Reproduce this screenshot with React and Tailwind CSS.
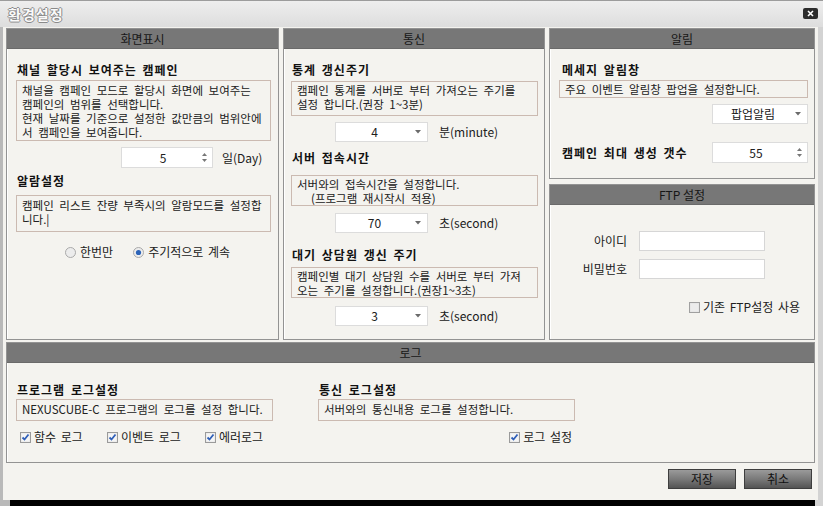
import React from 'react';

const Panel = ({ title, className = '', bodyClass = '', children }) => (
    <div className={`border border-[#939393] shadow-[inset_1px_1px_0_#ffffff] bg-[#f4f3ef] flex flex-col ${className}`}>
        <div className="h-[20px] shrink-0 bg-[#777777] border-b border-[#6a6a6a] flex items-center justify-center text-[12px] leading-[14px] text-[#161616]">
            {title}
        </div>
        <div className={`flex-1 flex flex-col ${bodyClass}`}>{children}</div>
    </div>
);

const Heading = ({ className = '', children }) => (
    <div className={`pl-[1px] text-[12px] leading-[14px] font-bold tracking-[1px] [word-spacing:2px] text-[#111] ${className}`}>{children}</div>
);

const Box = ({ className = '', children }) => (
    <div className={`border border-[#cbbab1] bg-[#f4f3ef] px-[5px] text-[11.5px] leading-[14px] [word-spacing:3px] text-[#202020] ${className}`}>{children}</div>
);

const Arrow = () => (
    <svg width="6" height="4" viewBox="0 0 6 4"><path d="M0 0h6L3 3.5z" fill="#6b6b6b" /></svg>
);

const Dropdown = ({ value, className = '' }) => (
    <div className={`h-[20px] bg-white border border-[#dcdcdc] flex items-center text-[12px] text-[#202020] ${className}`}>
        <span className="flex-1 text-center pl-[4px]">{value}</span>
        <span className="w-[18px] flex justify-center"><Arrow /></span>
    </div>
);

const Spin = ({ value, className = '' }) => (
    <div className={`h-[21px] bg-white border border-[#dcdcdc] flex items-center text-[12px] text-[#202020] ${className}`}>
        <span className="flex-1 text-center pl-[8px]">{value}</span>
        <span className="w-[16px] flex flex-col items-center gap-[3px]">
            <svg width="5" height="3" viewBox="0 0 5 3"><path d="M2.5 0L5 3H0z" fill="#777" /></svg>
            <svg width="5" height="3" viewBox="0 0 5 3"><path d="M0 0h5L2.5 3z" fill="#777" /></svg>
        </span>
    </div>
);

const Check = ({ label, className = '' }) => (
    <div className={`flex items-center gap-[3px] text-[12px] leading-[14px] [word-spacing:2px] text-[#202020] ${className}`}>
        <svg width="11" height="11" viewBox="0 0 11 11">
            <rect x="0.5" y="0.5" width="10" height="10" fill="#e6e6e6" stroke="#9a9a9a" />
            <rect x="1.5" y="1.5" width="8" height="8" fill="#f5f5f5" />
            <path d="M2.5 5.5l2 2 4-5" stroke="#2f5fb8" strokeWidth="1.8" fill="none" />
        </svg>
        <span>{label}</span>
    </div>
);

const Radio = ({ checked, label }) => (
    <div className="flex items-center gap-[4px] text-[12px] leading-[14px] [word-spacing:2px] text-[#202020]">
        <svg width="11" height="11" viewBox="0 0 11 11">
            <circle cx="5.5" cy="5.5" r="5" fill="#ececec" stroke="#a9a9a9" />
            {checked && <circle cx="5.5" cy="5.5" r="2.6" fill="#2b63b8" />}
        </svg>
        <span>{label}</span>
    </div>
);

const Button = ({ children }) => (
    <button className="w-[68px] h-[20px] border border-[#3e3e3e] bg-linear-to-b from-[#9a9a9a] via-[#7a7a7a] to-[#545454] text-[12px] text-[#111] flex items-center justify-center">
        {children}
    </button>
);

export default function App() {
    return (
        <div className="w-[823px] h-[506px] bg-[#f4f3ef] flex flex-col font-['Noto_Sans_CJK_KR',sans-serif] overflow-hidden select-none">
            {/* title bar */}
            <div className="h-[27px] shrink-0 border-t border-[#9c9c9c] bg-linear-to-b from-[#eeeeee] to-[#dddddd] flex items-center justify-between pl-[8px] pr-[5px]">
                <span className="text-[14px] font-bold tracking-[1px] text-[#fafafa] [text-shadow:-1px_0_0_#8a8a8a,1px_0_0_#8a8a8a,0_-1px_0_#8a8a8a,0_1px_0_#8a8a8a]">환경설정</span>
                <span className="w-[15px] h-[11px] mt-[-2px] rounded-[2px] bg-[#2c2c2c] flex items-center justify-center">
                    <svg width="7" height="7" viewBox="0 0 7 7"><path d="M1 1l5 5M6 1l-5 5" stroke="#fff" strokeWidth="1.6" /></svg>
                </span>
            </div>

            <div className="flex-1 flex border-l-[3px] border-l-[#b9b9b9] border-r-[5px] border-r-[#d3d3d3]">
                <div className="flex-1 flex flex-col pl-[3px] pr-[3px] pt-[1px]">
                    {/* top row */}
                    <div className="flex h-[312px] gap-[4px]">
                        <Panel title="화면표시" className="w-[273px]" bodyClass="pl-[9px] pr-[7px]">
                            <Heading className="mt-[14px]">채널 할당시 보여주는 캠페인</Heading>
                            <Box className="mt-[3px] h-[61px] pt-[2px]">
                                채널을 캠페인 모드로 할당시 화면에 보여주는<br />
                                캠페인의 범위를 선택합니다.<br />
                                현재 날짜를 기준으로 설정한 값만큼의 범위안에<br />
                                서 캠페인을 보여줍니다.
                            </Box>
                            <div className="mt-[6px] flex items-center ml-[105px] gap-[9px]">
                                <Spin value="5" className="w-[92px]" />
                                <span className="text-[12px] text-[#202020]">일(Day)</span>
                            </div>
                            <Heading className="mt-[6px]">알람설정</Heading>
                            <Box className="mt-[7px] h-[37px] pt-[2px]">
                                캠페인 리스트 잔량 부족시의 알람모드를 설정합<br />니다.|
                            </Box>
                            <div className="mt-[13px] ml-[49px] flex items-center gap-[20px]">
                                <Radio label="한번만" />
                                <Radio checked label="주기적으로 계속" />
                            </div>
                        </Panel>

                        <Panel title="통신" className="w-[262px]" bodyClass="pl-[7px] pr-[6px]">
                            <Heading className="mt-[14px]">통계 갱신주기</Heading>
                            <Box className="mt-[4px] h-[35px] pt-[1px]">
                                캠페인 통계를 서버로 부터 가져오는 주기를<br />
                                설정 합니다.(권장 1~3분)
                            </Box>
                            <div className="mt-[6px] ml-[44px] flex items-center gap-[11px]">
                                <Dropdown value="4" className="w-[93px]" />
                                <span className="text-[12px] text-[#202020]">분(minute)</span>
                            </div>
                            <Heading className="mt-[9px]">서버 접속시간</Heading>
                            <Box className="mt-[10px] h-[31px] pt-[1px]">
                                서버와의 접속시간을 설정합니다.<br />
                                <span className="pl-[14px]">(프로그램 재시작시 적용)</span>
                            </Box>
                            <div className="mt-[7px] ml-[44px] flex items-center gap-[11px]">
                                <Dropdown value="70" className="w-[93px]" />
                                <span className="text-[12px] text-[#202020]">초(second)</span>
                            </div>
                            <Heading className="mt-[15px]">대기 상담원 갱신 주기</Heading>
                            <Box className="mt-[5px] h-[31px] pt-[1px]">
                                캠페인별 대기 상담원 수를 서버로 부터 가져<br />
                                오는 주기를 설정합니다.(권장1~3초)
                            </Box>
                            <div className="mt-[8px] ml-[44px] flex items-center gap-[11px]">
                                <Dropdown value="3" className="w-[93px]" />
                                <span className="text-[12px] text-[#202020]">초(second)</span>
                            </div>
                        </Panel>

                        <div className="flex-1 flex flex-col gap-[5px]">
                            <Panel title="알림" className="h-[151px]" bodyClass="pl-[9px] pr-[6px]">
                                <Heading className="mt-[14px] pl-[3px]">메세지 알림창</Heading>
                                <Box className="mt-[3px] h-[18px] leading-[16px]">주요 이벤트 알림창 팝업을 설정합니다.</Box>
                                <div className="mt-[6px] flex justify-end">
                                    <Dropdown value="팝업알림" className="w-[96px]" />
                                </div>
                                <div className="mt-[18px] flex items-center justify-between">
                                    <Heading className="pl-[3px]">캠페인 최대 생성 갯수</Heading>
                                    <Spin value="55" className="w-[96px] h-[20px]" />
                                </div>
                            </Panel>
                            <Panel title="FTP 설정" className="flex-1">
                                <div className="mt-[26px] flex items-center">
                                    <span className="w-[77px] text-right text-[12px] text-[#202020]">아이디</span>
                                    <div className="ml-[12px] w-[126px] h-[20px] bg-white border border-[#d6d6d6]" />
                                </div>
                                <div className="mt-[8px] flex items-center">
                                    <span className="w-[77px] text-right text-[12px] text-[#202020]">비밀번호</span>
                                    <div className="ml-[12px] w-[126px] h-[20px] bg-white border border-[#d6d6d6]" />
                                </div>
                                <div className="mt-[21px] flex justify-end pr-[14px]">
                                    <div className="flex items-center gap-[3px] text-[12px] leading-[14px] [word-spacing:2px] text-[#202020]">
                                        <svg width="11" height="11" viewBox="0 0 11 11">
                                            <rect x="0.5" y="0.5" width="10" height="10" fill="#e2e2e2" stroke="#a0a0a0" />
                                            <rect x="1.5" y="1.5" width="8" height="8" fill="#ececec" />
                                        </svg>
                                        <span>기존 FTP설정 사용</span>
                                    </div>
                                </div>
                            </Panel>
                        </div>
                    </div>

                    {/* log panel */}
                    <Panel title="로그" className="mt-[2px] h-[121px]" bodyClass="pl-[9px]">
                        <div className="flex gap-[45px]">
                            <div className="w-[257px] flex flex-col">
                                <Heading className="mt-[20px]">프로그램 로그설정</Heading>
                                <Box className="mt-[2px] h-[22px] leading-[19px]">NEXUSCUBE-C 프로그램의 로그를 설정 합니다.</Box>
                                <div className="mt-[9px] flex items-center pl-[4px]">
                                    <Check label="함수 로그" className="w-[87px]" />
                                    <Check label="이벤트 로그" className="w-[98px]" />
                                    <Check label="에러로그" />
                                </div>
                            </div>
                            <div className="w-[257px] flex flex-col">
                                <Heading className="mt-[20px]">통신 로그설정</Heading>
                                <Box className="mt-[2px] h-[22px] leading-[19px]">서버와의 통신내용 로그를 설정합니다.</Box>
                                <div className="mt-[9px] flex justify-end pr-[3px]">
                                    <Check label="로그 설정" />
                                </div>
                            </div>
                        </div>
                    </Panel>

                    {/* buttons */}
                    <div className="mt-[6px] flex justify-end gap-[8px] pr-[3px]">
                        <Button>저장</Button>
                        <Button>취소</Button>
                    </div>
                </div>
            </div>

            {/* bottom edge */}
            <div className="h-[6px] shrink-0 flex">
                <div className="w-[10px] bg-[#b9b9b9]" />
                <div className="flex-1 bg-black" />
                <div className="w-[8px] bg-[#d3d3d3]" />
            </div>
        </div>
    );
}
